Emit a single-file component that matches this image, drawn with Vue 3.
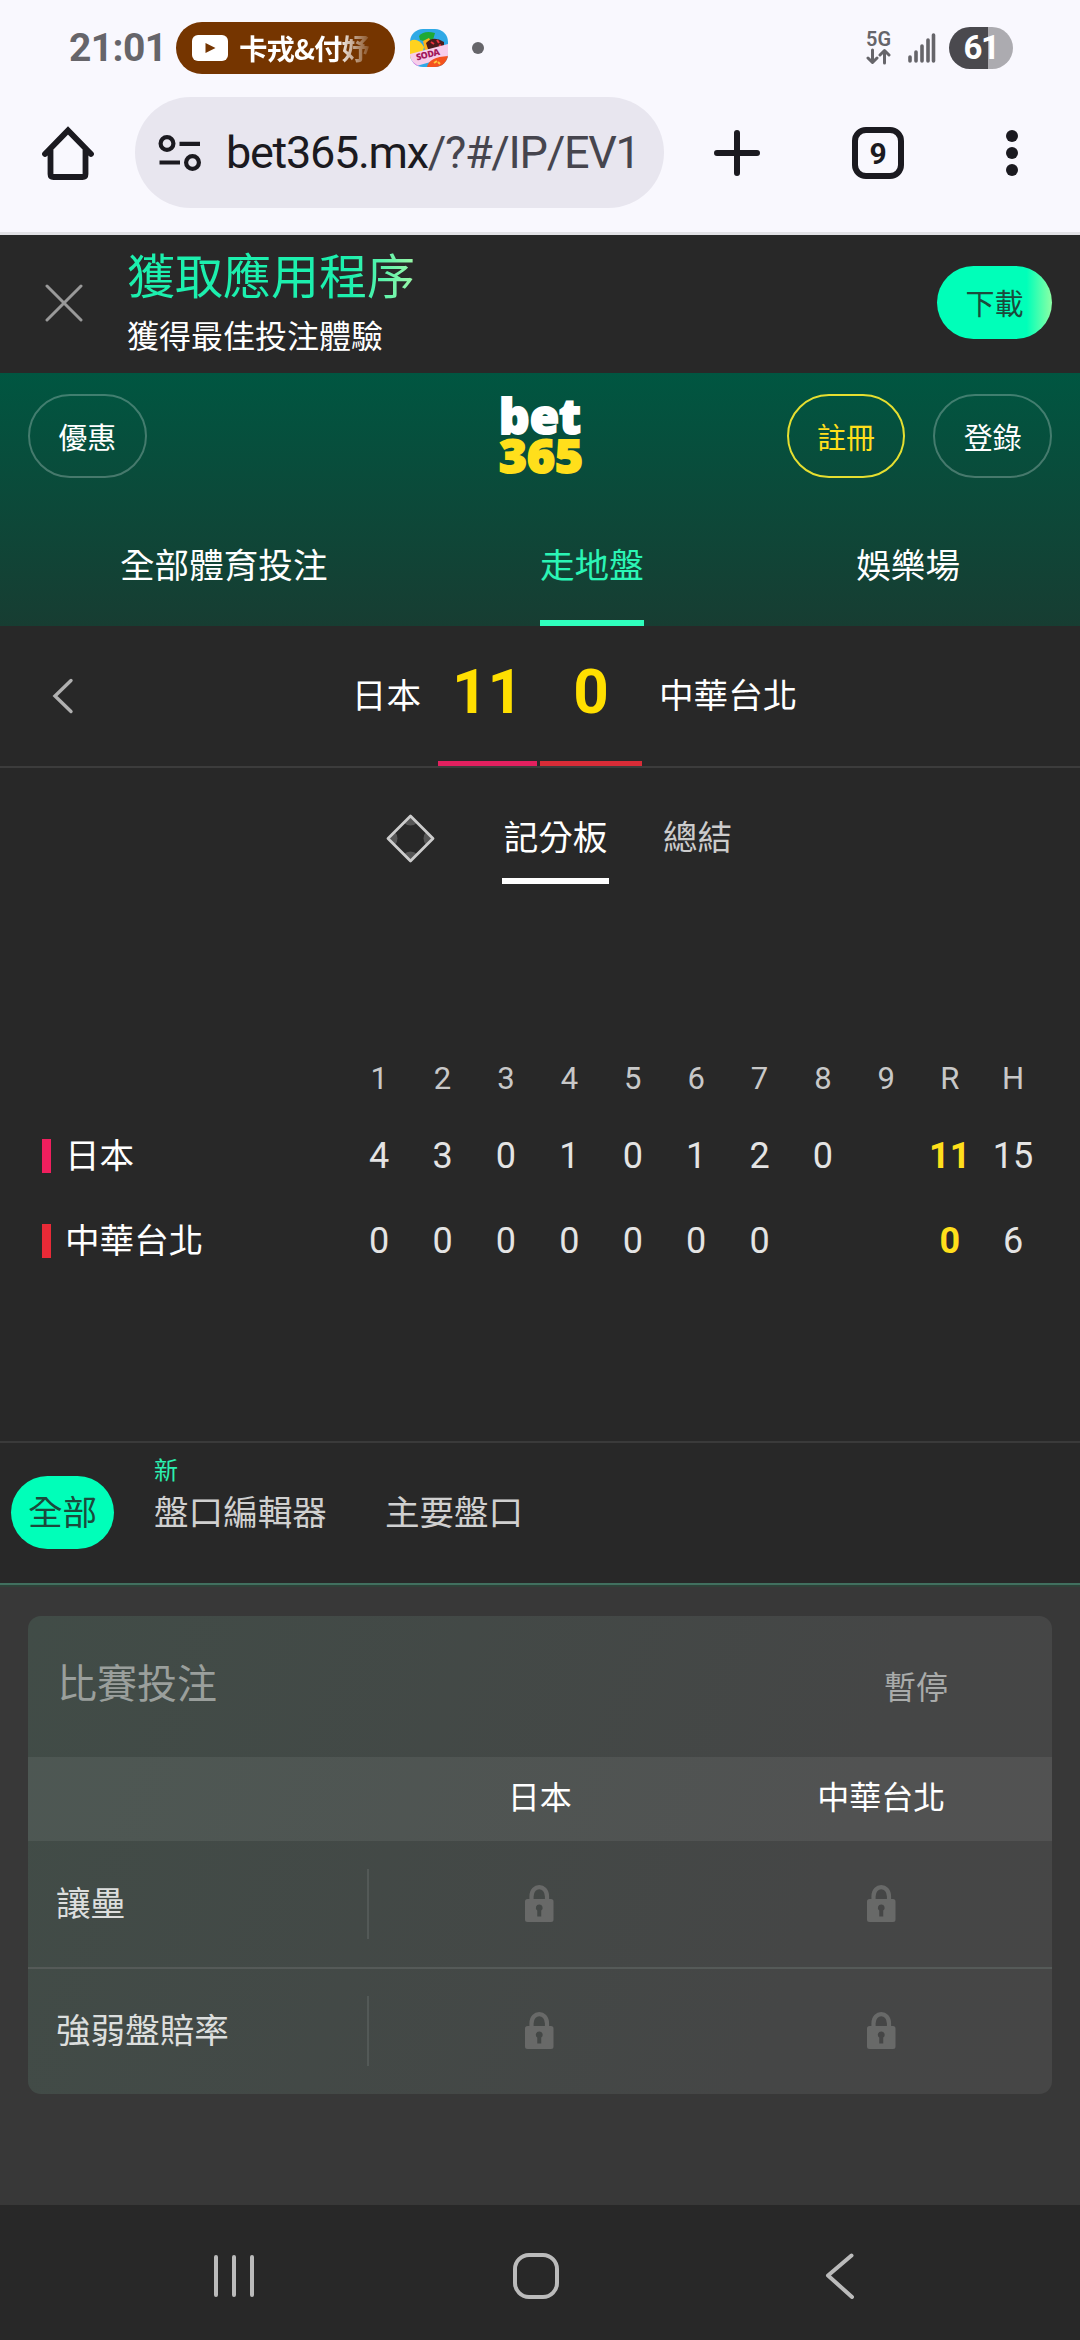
<script setup>
const innings = ['1', '2', '3', '4', '5', '6', '7', '8', '9', 'R', 'H']
const teams = [
  { name: '日本', tone: 'pink', cells: ['4', '3', '0', '1', '0', '1', '2', '0', '', '11', '15'] },
  { name: '中華台北', tone: 'red', cells: ['0', '0', '0', '0', '0', '0', '0', '', '', '0', '6'] },
]
const markets = ['讓壘', '強弱盤賠率']
</script>

<template>
  <div class="screen">
    <header class="chrome">
      <div class="status">
        <span class="clock">21:01</span>
        <div class="media">
          <svg width="36" height="26" viewBox="0 0 36 26">
            <rect width="36" height="26" rx="6" fill="#fff" />
            <path d="M13.5 8l10 5-10 5z" fill="#753500" />
          </svg>
          <span class="media-text">卡戎&amp;付妤</span>
        </div>
        <svg class="game" width="38" height="38" viewBox="0 0 38 38">
          <defs><clipPath id="gc"><rect width="38" height="38" rx="13" /></clipPath></defs>
          <g clip-path="url(#gc)">
            <rect width="38" height="38" fill="#2fa9e6" />
            <path d="M0 12Q8 8 14 18L12 26 0 30z" fill="#ffd21f" />
            <path d="M9 7Q14 1 25 4L23 11Q15 13 10 11z" fill="#1fa935" />
            <path d="M13 12l6-3 5 9-9 4z" fill="#ffb11c" />
            <path d="M16 14Q23 6 34 13L34 20 18 20z" fill="#4a1b1c" />
            <path d="M21 13l3 2M27 11l2 3M29 17l2-1" stroke="#e8323c" stroke-width="2" />
            <path d="M0 25L38 15V28L3 38H0z" fill="#f7cdea" />
            <path d="M0 31l10 7H0z" fill="#d779e6" />
            <path d="M17 38Q19 28 38 27V38z" fill="#f4521e" />
            <path d="M24 34l3-2M28 33l2 2" stroke="#ffc53a" stroke-width="2" />
            <text x="7" y="31.500" font-size="9" font-weight="900" fill="#a3195b" textLength="24" transform="rotate(-14 7 31.500)">SODA</text>
          </g>
        </svg>
        <i class="dot"></i>
        <svg class="net" width="27" height="34" viewBox="0 0 27 34">
          <text x="0" y="14.500" font-size="20" font-weight="600" fill="#66656a" textLength="25" lengthAdjust="spacingAndGlyphs">5G</text>
          <path d="M6.500 19v12M2 27l4.500 4.500L11 27M18.500 32V20M14 24l4.500-4.500L23 24" fill="none" stroke="#66656a" stroke-width="3" stroke-linecap="round" stroke-linejoin="round" />
        </svg>
        <svg class="bars" width="28" height="30" viewBox="0 0 28 30">
          <path d="M2 24v4M8 19v9M14 13v15M20 7v21M25.500 2v26" stroke="#66656a" stroke-width="3.600" stroke-linecap="round" />
        </svg>
        <span class="battery">61</span>
      </div>
      <div class="toolbar">
        <svg class="home" width="52" height="54" viewBox="0 0 52 54">
          <path d="M3 28L26 4.500 49 28M8.500 24V48Q8.500 51 11.500 51H40.500Q43.500 51 43.500 48V24" fill="none" stroke="#1b1a20" stroke-width="5.800" stroke-linejoin="miter" stroke-linecap="round" />
        </svg>
        <div class="omnibox">
          <svg width="44" height="38" viewBox="0 0 44 38">
            <g fill="none" stroke="#1b1a20" stroke-width="4.200">
              <circle cx="9" cy="9.500" r="6.400" /><path d="M21.500 9.800H42M1.500 28.500H22" />
              <circle cx="34.500" cy="28.500" r="6.400" />
            </g>
          </svg>
          <span class="url">bet365.mx<span>/?#/IP/EV1</span></span>
        </div>
        <svg class="plus" width="46" height="46" viewBox="0 0 46 46">
          <path d="M23 3V43M3 23H43" stroke="#1b1a20" stroke-width="6" stroke-linecap="round" />
        </svg>
        <span class="tabs">9</span>
        <svg class="more" width="12" height="46" viewBox="0 0 12 46" fill="#1b1a20">
          <circle cx="6" cy="6" r="6" /><circle cx="6" cy="23" r="6" /><circle cx="6" cy="40" r="6" />
        </svg>
      </div>
    </header>

    <section class="banner">
      <svg width="38" height="38" viewBox="0 0 38 38">
        <path d="M2 2L36 36M36 2L2 36" stroke="#999" stroke-width="3" stroke-linecap="round" />
      </svg>
      <div class="pitch">
        <div class="pitch-title">獲取應用程序</div>
        <div class="pitch-sub">獲得最佳投注體驗</div>
      </div>
      <div class="download">下載</div>
    </section>

    <section class="head">
      <div class="account">
        <span class="btn">優惠</span>
        <svg class="logo" width="86" height="80" viewBox="0 0 86 80">
          <text x="1" y="38" fill="#fff" stroke="#fff" font-size="47" textLength="82" lengthAdjust="spacingAndGlyphs">bet</text>
          <text x="1" y="77" fill="#ffdf1b" stroke="#ffdf1b" font-size="46" textLength="84" lengthAdjust="spacingAndGlyphs">365</text>
        </svg>
        <span class="btn yellow">註冊</span>
        <span class="btn">登錄</span>
      </div>
      <nav class="nav">
        <span>全部體育投注</span>
        <span class="on">走地盤</span>
        <span>娛樂場</span>
      </nav>
    </section>

    <section class="score">
      <div class="side left">
        <svg width="22" height="36" viewBox="0 0 22 36">
          <path d="M19 2.500L3 18 19 33.500" fill="none" stroke="#b0b0b0" stroke-width="3.400" stroke-linecap="round" />
        </svg>
        <span>日本</span>
      </div>
      <div class="pts pink">11</div>
      <div class="pts red">0</div>
      <div class="side right">中華台北</div>
    </section>

    <section class="views">
      <svg width="49" height="49" viewBox="0 0 49 49">
        <defs><clipPath id="dc"><path d="M24.500 2L47 24.500 24.500 47 2 24.500z" /></clipPath></defs>
        <g clip-path="url(#dc)" fill="#555">
          <circle cx="24.500" cy="2" r="9.500" /><circle cx="24.500" cy="47" r="9.500" />
          <circle cx="2" cy="24.500" r="9.500" /><circle cx="47" cy="24.500" r="9.500" />
        </g>
        <path d="M24.500 2L47 24.500 24.500 47 2 24.500z" fill="none" stroke="#ccc" stroke-width="2.800" stroke-linejoin="round" />
      </svg>
      <span class="view on">記分板</span>
      <span class="view">總結</span>
    </section>

    <section class="board">
      <div class="line heads">
        <span class="team"></span>
        <span v-for="i in innings" :key="i">{{ i }}</span>
      </div>
      <div v-for="t in teams" :key="t.name" class="line">
        <span class="team" :class="t.tone"><i></i>{{ t.name }}</span>
        <span v-for="(c, k) in t.cells" :key="k" :class="{ runs: k === 9 }">{{ c }}</span>
      </div>
    </section>

    <section class="filters">
      <span class="all">全部</span>
      <span class="filter"><small>新</small>盤口編輯器</span>
      <span class="filter">主要盤口</span>
    </section>

    <main class="body">
      <div class="card">
        <div class="card-head"><span>比賽投注</span><span class="paused">暫停</span></div>
        <div class="row cols"><span></span><span>日本</span><span>中華台北</span></div>
        <div v-for="m in markets" :key="m" class="row market">
          <span class="label">{{ m }}</span>
          <span v-for="n in 2" :key="n" class="odds">
            <svg width="29" height="37" viewBox="0 0 29 37">
              <path d="M6.500 16V11.500C6.500 -1 22 -1 22 11.500V16" fill="none" stroke="#686968" stroke-width="4.200" />
              <path fill-rule="evenodd" fill="#686968" d="M2.500 14H26Q28.500 14 28.500 16.500V34.500Q28.500 37 26 37H2.500Q0 37 0 34.500V16.500Q0 14 2.500 14zM14.250 19.500a3.300 3.300 0 0 0-2 6V31.500h4V25.500a3.300 3.300 0 0 0-2-6z" />
            </svg>
          </span>
        </div>
      </div>
    </main>

    <footer class="sysnav">
      <svg width="42" height="44" viewBox="0 0 42 44"><path d="M3 3V41M21 3V41M39 3V41" stroke="#bbb" stroke-width="4" stroke-linecap="round" /></svg>
      <svg width="46" height="46" viewBox="0 0 46 46"><rect x="2" y="2" width="42" height="42" rx="14" fill="none" stroke="#bbb" stroke-width="4" /></svg>
      <svg width="30" height="46" viewBox="0 0 30 46"><path d="M26.500 2.500L3 22.500 27 44" fill="none" stroke="#bbb" stroke-width="4" stroke-linecap="round" stroke-linejoin="round" /></svg>
    </footer>
  </div>
</template>

<style>
body { background: #282828; }
</style>

<style scoped>
* { box-sizing: border-box; }
.screen {
  width: 1080px; height: 2340px; overflow: hidden;
  display: flex; flex-direction: column;
  background: #282828; color: #fff;
  font: 34.6px/50px Roboto, "Noto Sans CJK TC", sans-serif;
  white-space: nowrap;
}
svg { display: block; flex: none; }
.chrome { height: 235px; background: #f9f8fe; border-bottom: 3px solid #e2e2e6; flex: none; }
.status { height: 96px; margin-bottom: 1px; display: flex; align-items: center; padding-left: 69px; }
.clock { width: 107px; font-size: 39px; font-weight: 700; color: #66656a; letter-spacing: -0.6px; }
.media {
  width: 219px; height: 52px; border-radius: 26px; background: #753500;
  display: flex; align-items: center; gap: 11px; padding-left: 16px;
}
.media-text {
  font: 700 28.5px/48px "Noto Sans CJK TC", sans-serif; width: 142px;
  letter-spacing: -1px;
  background: linear-gradient(90deg, #fff 98px, #753500 136px);
  -webkit-background-clip: text; background-clip: text; color: transparent;
}
.game { margin-left: 15px; font-family: "Noto Sans", sans-serif; }
.dot { width: 12px; height: 12px; border-radius: 50%; background: #66656a; margin-left: 24px; }
.net { margin-left: 382px; }
.bars { margin-left: 15px; }
.battery {
  width: 64px; height: 42px; border-radius: 21px; margin-left: 13px;
  background: linear-gradient(90deg, #4a494e 39px, #acabb0 39px);
  font-size: 33px; font-weight: 700; line-height: 42px; text-align: center; letter-spacing: -1.5px;
}
.toolbar { height: 111px; display: flex; align-items: center; padding-left: 42px; }
.omnibox {
  width: 529px; height: 111px; border-radius: 56px; background: #e8e6ef; margin-left: 41px;
  display: flex; align-items: center; padding-left: 23px;
}
.url { margin-left: 24px; font-size: 45px; line-height: 113px; color: #1b1a20; letter-spacing: -1.3px; }
.url span { color: #46454e; }
.plus { margin-left: 50px; }
.tabs {
  width: 52px; height: 52px; border: 6px solid #1b1a20; border-radius: 14px; margin-left: 92px;
  color: #1b1a20; font-size: 30px; font-weight: 700; line-height: 41px; text-align: center;
}
.more { margin-left: 102px; }
.banner { height: 138px; flex: none; display: flex; align-items: center; padding-left: 45px; }
.banner > svg { margin-top: -3px; }
.pitch { margin-left: 44px; width: 810px; }
.pitch-title {
  font-size: 48px; line-height: 66px; width: 287px;
  background: linear-gradient(90deg, #1cf0ae 78%, #9af7a8);
  -webkit-background-clip: text; background-clip: text; color: transparent;
}
.pitch-sub { font-size: 32px; line-height: 52px; }
.banner .download {
  width: 115px; height: 73px; border-radius: 37px; margin-top: -3px;
  background: linear-gradient(90deg, #00ffb9 78%, #8dffa5); color: #1b4a3c;
  font-size: 29px; line-height: 78px; text-align: center;
}
.head { height: 253px; flex: none; background: linear-gradient(#005641, #173d32); }
.account { display: flex; align-items: center; padding: 21px 28px 0; height: 105px; }
.btn {
  width: 119px; height: 84px; border: 2px solid rgba(255, 255, 255, .25); border-radius: 42px;
  font-size: 29px; line-height: 87px; text-align: center;
}
.btn.yellow { border-color: #e6df30; color: #ffdf1b; margin: 0 28px 0 203px; }
.logo { margin-left: 351px; overflow: visible; font-family: "Noto Sans", sans-serif; font-weight: 900; stroke-width: 1.8px; }
.nav { height: 148px; display: flex; justify-content: space-between; padding: 0 120px; }
.nav span { line-height: 176px; border-bottom: 6px solid transparent; height: 148px; }
.nav .on { color: #2bf5b5; border-color: #2fffbd; }
.score { height: 142px; flex: none; display: flex; border-bottom: 2px solid #3c3c3c; line-height: 140px; }
.side.left { width: 438px; padding: 0 17px 0 52px; display: flex; justify-content: space-between; align-items: center; }
.side.right { padding-left: 17px; }
.pts { font-size: 62px; font-weight: 700; color: #ffdf00; text-align: center; line-height: 132px; border-bottom: 5px solid #e2205f; width: 99px; }
.pts.red { width: 102px; margin-left: 3px; border-color: #d92c37; }
.views { height: 116px; flex: none; display: flex; padding: 0 0 0 386px; }
.views svg { margin-top: 46px; }
.view { line-height: 140px; height: 116px; color: #ccc; }
.view.on { color: #fff; width: 107px; text-align: center; border-bottom: 6px solid #fff; margin: 0 54px 0 67px; }
.board { height: 557px; flex: none; padding: 169px 35px 0 42px; }
.line { display: grid; grid-template-columns: 305.5px repeat(11, 63.4px); height: 85px; line-height: 87px; text-align: center; font-size: 36px; color: #e4e4e4; }
.line.heads { height: 60px; line-height: 52px; font-size: 31px; color: #c8c8c8; }
.team { display: flex; align-items: center; text-align: left; font-size: 34.6px; color: #fff; line-height: 86px; margin-top: -1px; }
.team i { width: 9px; height: 34px; background: #f01f5e; margin-right: 14px; }
.team.red i { background: #e92a37; }
.runs { font-weight: 700; color: #ffdf1b; }
.filters { height: 144px; flex: none; display: flex; border-top: 2px solid #3a3a3a; border-bottom: 2px solid #41705f; padding-left: 11px; }
.all { width: 103px; height: 73px; margin-top: 33px; border-radius: 37px; background: #00ffb9; color: #1b4a3c; text-align: center; line-height: 74px; }
.filter { position: relative; margin: 33px 0 0 40px; line-height: 74px; color: #d0d0d0; }
.filter + .filter { margin-left: 58px; }
.filter small { position: absolute; left: 0; top: -20px; font-size: 24px; line-height: 30px; color: #2bf0b0; }
.body { height: 620px; flex: none; background: #383838; border-top: 2px solid #2f4239; padding: 29px 28px 0; }
.card { height: 478px; border-radius: 13px; overflow: hidden; background: linear-gradient(110deg, #414c47, #454646 75%, #464646); }
.card-head { height: 141px; display: flex; padding: 0 104px 0 29px; justify-content: space-between; font-size: 40px; line-height: 138px; color: #9a9f9c; }
.paused { font-size: 32px; line-height: 144px; color: #a9abaa; }
.row { display: grid; grid-template-columns: 341px 341.5px 341.5px; align-items: center; }
.cols { height: 84px; background: rgba(255, 255, 255, .065); font-size: 32px; line-height: 82px; text-align: center; }
.cols span { height: 84px; }
.market { height: 126px; color: #dcdedd; }
.market + .market { height: 127px; border-top: 2px solid #555a58; padding-bottom: 1px; }
.label { height: 70px; line-height: 70px; padding-left: 28px; border-right: 2px solid #535957; }
.odds { display: flex; justify-content: center; margin-top: -2px; }
.sysnav { height: 135px; flex: none; background: #282828; display: flex; align-items: center; padding: 7px 0 0 213px; }
.sysnav svg + svg { margin-left: 258px; }
.sysnav svg + svg + svg { margin-left: 266px; }
</style>
